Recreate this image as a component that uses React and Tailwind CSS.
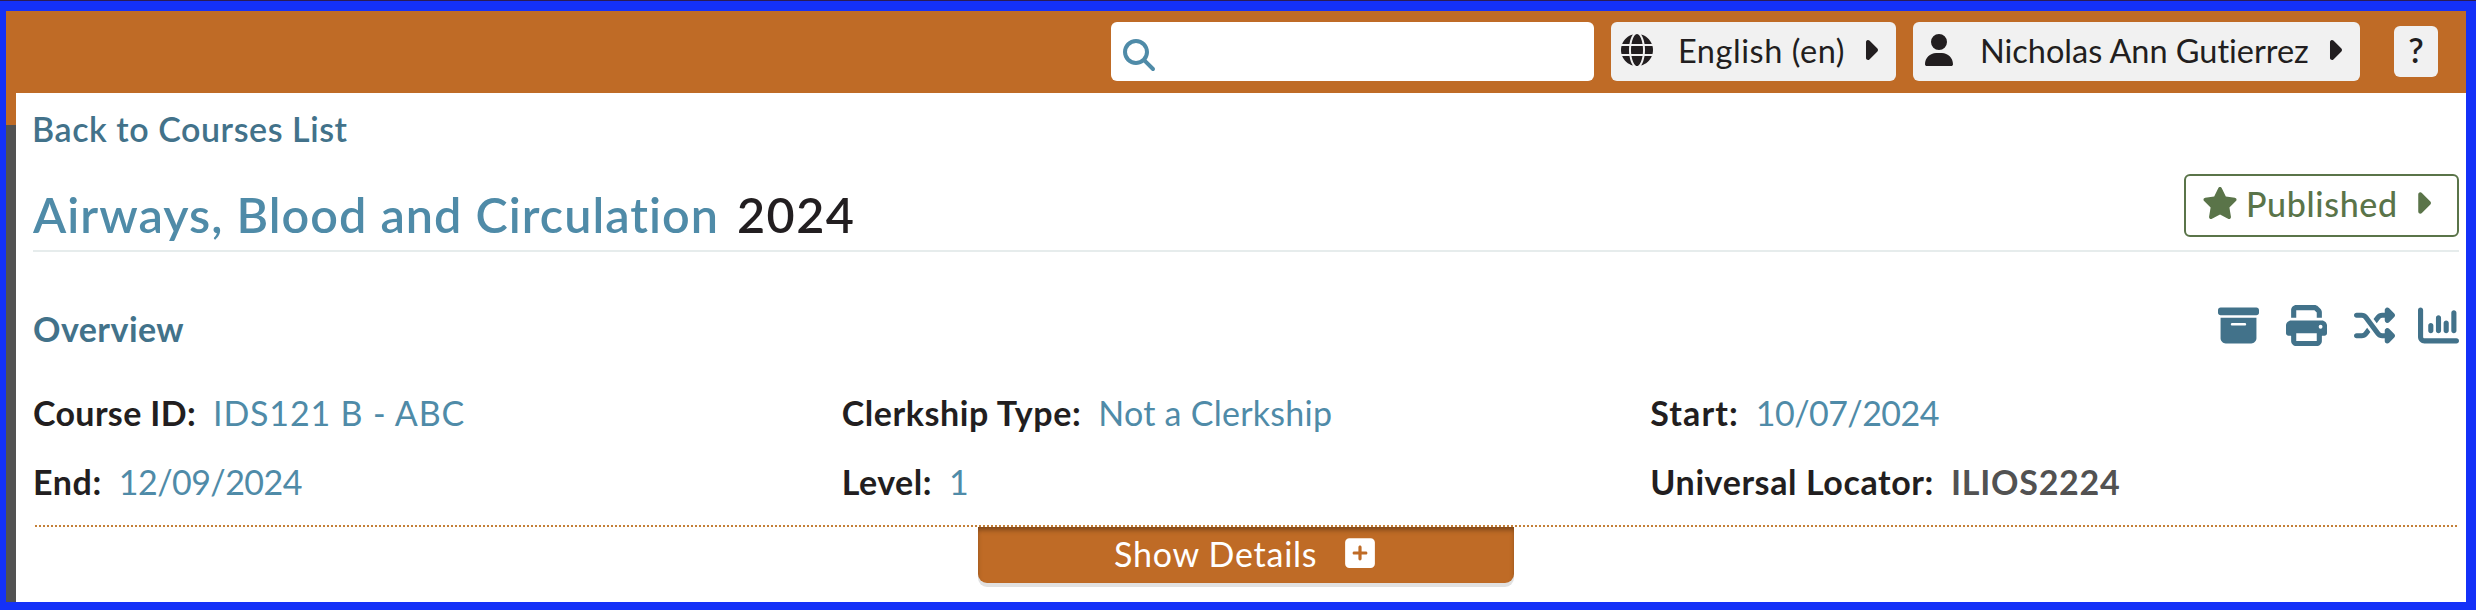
import React from "react";
import {
  FaMagnifyingGlass, FaGlobe, FaUser, FaCaretRight, FaStar,
  FaBoxArchive, FaPrint, FaShuffle, FaChartColumn, FaSquarePlus,
} from "react-icons/fa6";

function Header() {
  return (
    <header className="flex h-[82px] items-start bg-[#bf6b26] pt-[11px] pr-7 text-[32.5px] leading-10 text-[#221e20]">
      <div className="ml-auto flex h-[59px] w-[483px] items-center rounded-md bg-white pl-3">
        <FaMagnifyingGlass className="mt-[7px] size-8 text-[#4f8ba8]" />
      </div>
      <button className="ml-[17px] flex h-[59px] w-[285px] items-start rounded-md bg-[#f1f1f1] pt-2 pl-2.5">
        <FaGlobe className="mt-1 size-8 shrink-0" />
        <span className="mt-px ml-[25px] w-[180px] text-left tracking-[0.55px] whitespace-nowrap">English (en)</span>
        <FaCaretRight className="mt-1 ml-[2px] h-8 w-5 shrink-0" />
      </button>
      <button className="ml-[17px] flex h-[59px] w-[447px] items-start rounded-md bg-[#f1f1f1] pt-2 pl-3">
        <FaUser className="mt-1 h-8 w-7 shrink-0" />
        <span className="mt-px ml-[27px] w-[342px] text-left tracking-[-0.02px] whitespace-nowrap">Nicholas Ann Gutierrez</span>
        <FaCaretRight className="mt-1 ml-[2px] h-8 w-5 shrink-0" />
      </button>
      <button className="mt-1 ml-[34px] flex h-[51px] w-11 items-center justify-center rounded-md bg-[#f1f1f1] pb-[3px] text-[34px] font-semibold">
        ?
      </button>
    </header>
  );
}

function Field({ label, labelClass, children, valueClass }) {
  return (
    <div className="flex gap-[17px] whitespace-nowrap">
      <span className={`font-bold text-[#221e20] ${labelClass}`}>{label}</span>
      <span className={valueClass}>{children}</span>
    </div>
  );
}

function Overview() {
  return (
    <section>
      <div className="mt-[52px] flex h-[46px] items-start justify-between text-[#42728a]">
        <h2 className="mt-[5px] font-bold tracking-[0.45px]">Overview</h2>
        <div className="mt-px flex gap-[27px]">
          <FaBoxArchive className="size-[41px]" />
          <FaPrint className="size-[41px]" />
          <FaShuffle className="size-[41px]" />
          <FaChartColumn className="-ml-1 size-[41px]" />
        </div>
      </div>
      <div className="mt-[43px] grid grid-cols-3 gap-y-[29px]">
        <Field label="Course ID:" labelClass="tracking-[0.35px]" valueClass="text-[#4f8ba8] tracking-[0.84px]">IDS121 B - ABC</Field>
        <Field label="Clerkship Type:" labelClass="tracking-[0.58px]" valueClass="text-[#4f8ba8] tracking-[0.25px]">Not a Clerkship</Field>
        <Field label="Start:" labelClass="tracking-[1.1px]" valueClass="text-[#4f8ba8] tracking-[-0.55px]">10/07/2024</Field>
        <Field label="End:" labelClass="tracking-[0.6px]" valueClass="text-[#4f8ba8] tracking-[-0.55px]">12/09/2024</Field>
        <Field label="Level:" labelClass="tracking-[0.5px]" valueClass="text-[#4f8ba8]">1</Field>
        <Field label="Universal Locator:" labelClass="tracking-[0.6px]" valueClass="font-bold text-[#525252] tracking-[0.75px]">ILIOS2224</Field>
      </div>
      <div className="mt-[23px] ml-[2px] mr-[2px] h-[2px] bg-[repeating-linear-gradient(90deg,#c48038_0_2px,transparent_2px_4px)]" />
      <button className="ml-[945px] flex h-14 w-[536px] items-start rounded-b-[9px] bg-[#bf6b26] pt-[7px] pl-[136px] text-white shadow-[0_4px_0_#e1e1e1,inset_0_4px_5px_-1px_rgba(0,0,0,0.35)]">
        <span className="w-[210px] text-left tracking-[0.75px] whitespace-nowrap">Show Details</span>
        <FaSquarePlus className="mt-[2px] ml-[21px] h-[34px] w-[30px]" />
      </button>
    </section>
  );
}

export default function App() {
  return (
    <div className="h-[610px] w-[2476px] border-t border-[#2a1c56] bg-[#1431f8] pt-[10px] pr-[10px] pb-2 pl-[6px] font-['Lato',sans-serif] text-[34px] leading-10 [font-variant-ligatures:none]">
      <div className="h-[591px] bg-[linear-gradient(#bf6b26_0_114px,#525252_114px)]">
        <Header />
        <main className="ml-[10px] h-[509px] bg-white pt-4 pr-[7px] pl-[17px]">
          <a className="block -ml-px font-semibold tracking-[0.56px] text-[#42728a]">Back to Courses List</a>
          <div className="mt-[25px] flex h-[78px] items-start justify-between border-b-2 border-[#e6ecec]">
            <h1 className="mt-[10px] flex text-[48.5px] leading-[60px] font-semibold tracking-[1.02px] whitespace-nowrap text-[#4f8ba8]">
              Airways, Blood and Circulation
              <span className="ml-[18px] tracking-[1.5px] text-[#221e20]">2024</span>
            </h1>
            <button className="flex h-[63px] w-[275px] items-start rounded-md border-2 border-[#5a7449] pt-[7px] pl-[16px] text-[#5a7449]">
              <FaStar className="mt-1 h-8 w-9 shrink-0" />
              <span className="mt-px ml-2 w-[156px] text-left font-medium tracking-[0.65px]">Published</span>
              <FaCaretRight className="mt-[3px] ml-[10px] h-[34px] w-[21px] shrink-0" />
            </button>
          </div>
          <Overview />
        </main>
      </div>
    </div>
  );
}
